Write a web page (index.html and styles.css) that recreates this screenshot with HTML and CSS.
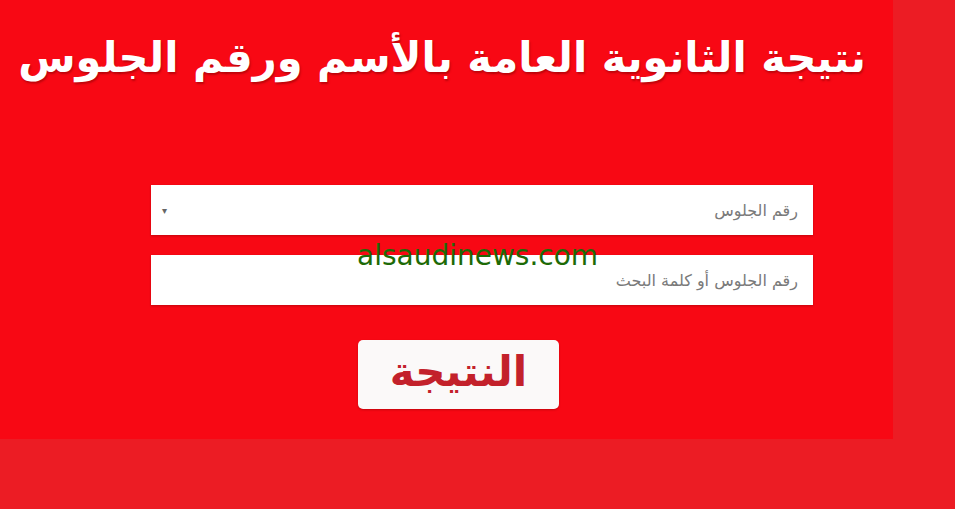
FILE: index.html
```html
<!DOCTYPE html>
<html lang="ar">
<head>
<meta charset="utf-8">
<link rel="stylesheet" href="styles.css">
</head>
<body>
<div class="panel">
  <h1 class="title" dir="rtl">نتيجة الثانوية العامة بالأسم ورقم الجلوس</h1>
  <form class="form">
    <div class="field select">
      <span class="arrow">▾</span>
      <span class="ph" dir="rtl">رقم الجلوس</span>
    </div>
    <div class="field">
      <span></span>
      <span class="ph" dir="rtl">رقم الجلوس أو كلمة البحث</span>
    </div>
    <div class="mark">alsaudinews.com</div>
    <div class="btn-row">
      <button type="button" class="btn" dir="rtl">النتيجة</button>
    </div>
  </form>
</div>
</body>
</html>
```
FILE: styles.css
```css
html, body {
  margin: 0;
  padding: 0;
}
body {
  width: 955px;
  height: 509px;
  background: #ec1c24;
  overflow: hidden;
  font-family: "DejaVu Sans", "Noto Sans", sans-serif;
}
.panel {
  width: 893px;
  height: 439px;
  background: #f80814;
  display: flex;
  flex-direction: column;
}
.title {
  margin: 0;
  padding: 28px 27px 0 0;
  color: #fff;
  font-size: 41.6px;
  font-weight: bold;
  line-height: 60px;
  text-align: right;
  white-space: nowrap;
  text-shadow: 1px 2px 2px rgba(120,0,0,0.45);
}
.form {
  margin: 97px 0 0 151px;
  width: 662px;
  display: flex;
  flex-direction: column;
  gap: 20px;
  position: relative;
}
.field {
  height: 50px;
  background: #fff;
  box-shadow: 0 1px 2px rgba(120,0,0,0.4);
  display: flex;
  align-items: center;
  justify-content: space-between;
  padding: 0 15px 0 11px;
}
.ph {
  color: #7a7a7a;
  font-size: 16px;
}
.arrow {
  color: #666;
  font-size: 10px;
}
.mark {
  position: absolute;
  left: 206px;
  top: 54px;
  color: #1d6a06;
  font-size: 28px;
}
.btn-row {
  display: flex;
  padding: 15px 0 0 207px;
}
.btn {
  width: 201px;
  height: 69px;
  background: #fbf9f9;
  border: none;
  border-radius: 5px;
  color: #c3212b;
  font-family: "DejaVu Sans", sans-serif;
  font-weight: bold;
  font-size: 42px;
  line-height: 1;
  padding: 0 0 6px;
  box-shadow: 0 1px 2px rgba(120,0,0,0.4);
}
```
